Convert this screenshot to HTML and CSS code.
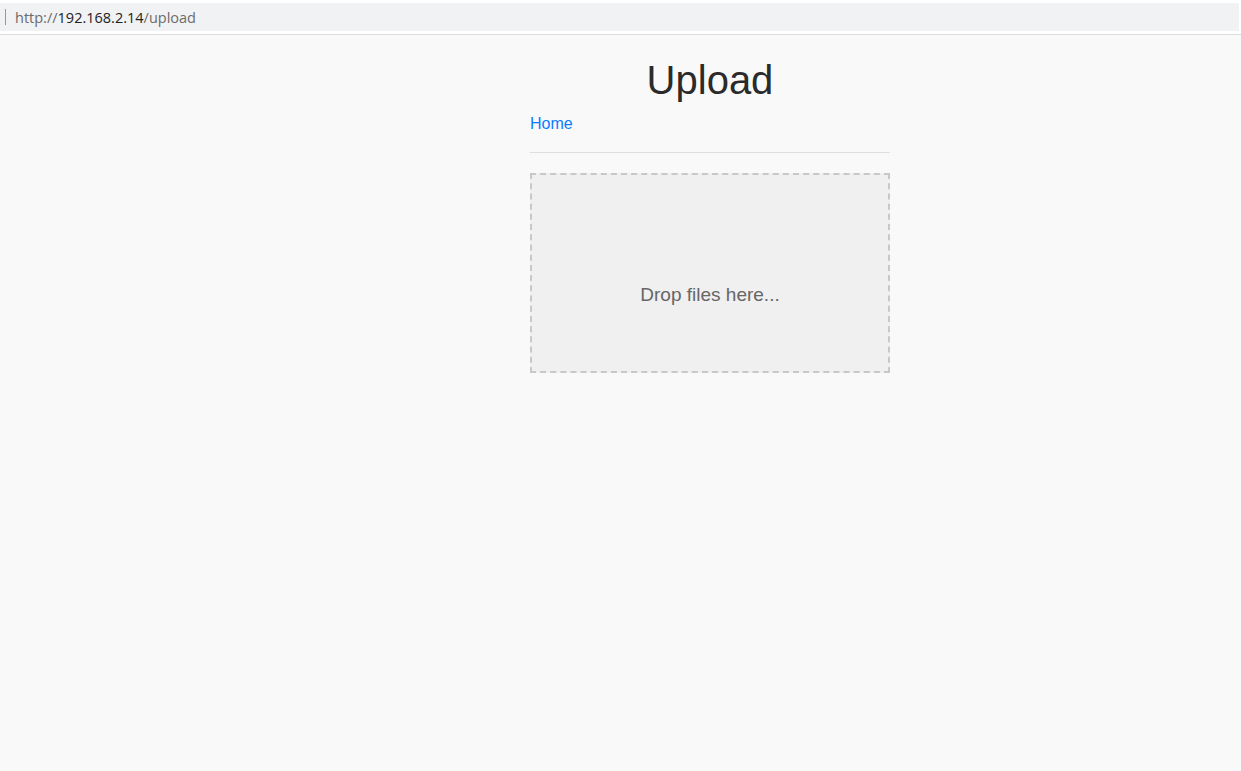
FILE: index.html
```html
<!DOCTYPE html>
<html>
<head>
<meta charset="utf-8">
<title>Upload</title>
<link rel="stylesheet" href="styles.css">
</head>
<body>
<div class="addressbar">
  <div class="addressbar-inner">
    <span class="caret"></span>
    <span class="url"><span class="dim">http://</span>192.168.2.14<span class="dim">/upload</span></span>
  </div>
</div>
<main class="page">
  <div class="container">
    <h1 class="title">Upload</h1>
    <nav class="nav"><a href="#" class="nav-link">Home</a></nav>
    <hr class="divider">
    <div class="dropzone">
      <span class="dropzone-text">Drop files here...</span>
    </div>
  </div>
</main>
</body>
</html>
```
FILE: styles.css
```css
html, body {
  margin: 0;
  padding: 0;
  height: 100%;
}
body {
  background: #f9f9f9;
  font-family: "Liberation Sans", Arial, sans-serif;
  color: #333;
  display: flex;
  flex-direction: column;
}
.addressbar {
  background: #ffffff;
  padding: 3px 0 3px 0;
  border-bottom: 1px solid #dcdcdc;
  flex: none;
}
.addressbar-inner {
  background: #f1f2f4;
  height: 28px;
  display: flex;
  align-items: center;
  padding-left: 5px;
  margin-right: 2px;
}
.caret {
  width: 1px;
  height: 16px;
  background: #999;
  margin-right: 9px;
}
.url {
  font-family: "Open Sans", "Liberation Sans", sans-serif;
  font-size: 14.5px;
  color: #222;
}
.url .dim {
  color: #6b6b6b;
}
.page {
  flex: 1;
  margin-right: 1px;
}
.container {
  width: 360px;
  margin-left: 530px;
}
.title {
  margin: 21px 0 0 0;
  font-size: 40px;
  font-weight: 400;
  text-align: center;
  line-height: 48px;
  color: #2b2b2b;
}
.nav {
  margin-top: 11px;
  line-height: 18px;
}
.nav-link {
  font-size: 16px;
  color: #0a7cff;
  text-decoration: none;
}
.divider {
  border: 0;
  border-top: 1px solid #dedede;
  margin: 19px 0 20px 0;
}
.dropzone {
  height: 196px;
  border: 2px dashed #c8c8c8;
  background: #f0f0f0;
  display: flex;
  justify-content: center;
  align-items: flex-start;
}
.dropzone-text {
  margin-top: 109px;
  font-size: 19px;
  color: #666;
}
```
